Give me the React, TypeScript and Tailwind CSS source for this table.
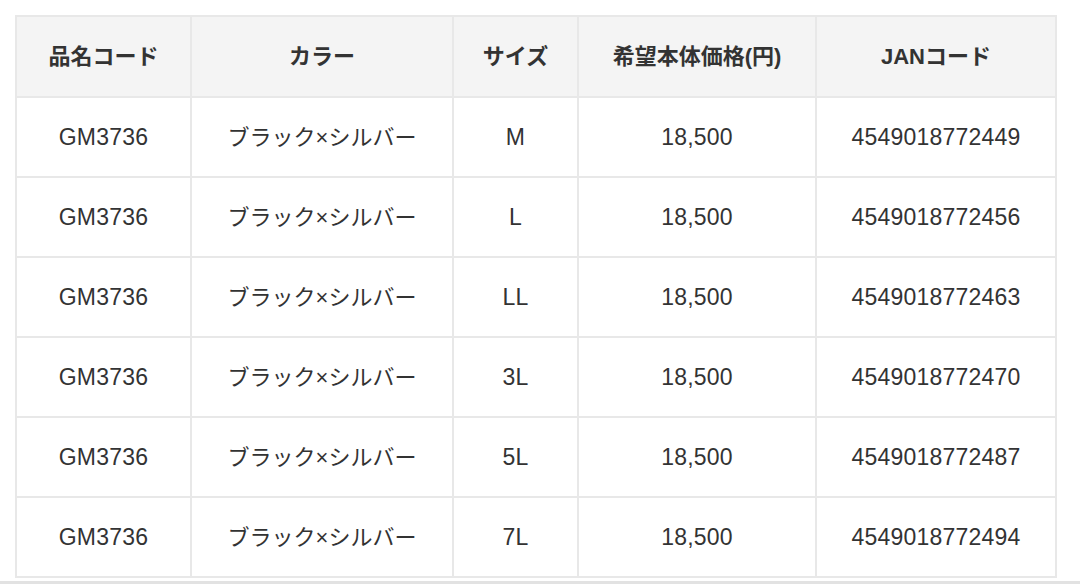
const HEADERS = ['品名コード', 'カラー', 'サイズ', '希望本体価格(円)', 'JANコード']
const WIDTHS = ['w-[175px]', 'w-[262px]', 'w-[125px]', 'w-[238px]', 'w-[240px]']

const ROWS = [
  { size: 'M', jan: '4549018772449' },
  { size: 'L', jan: '4549018772456' },
  { size: 'LL', jan: '4549018772463' },
  { size: '3L', jan: '4549018772470' },
  { size: '5L', jan: '4549018772487' },
  { size: '7L', jan: '4549018772494' },
]

const cell = 'border-2 border-[#e8e8e8] text-center'
const latin = `${cell} text-[23px] tracking-[0.2px]`

export default function App() {
  return (
    <main
      className="w-[1080px] h-[584px] bg-white text-[#333] overflow-hidden flex flex-col"
      style={{ fontFamily: "'Liberation Sans', 'Noto Sans CJK JP', sans-serif" }}
    >
      <div className="pt-[15px] pl-[15px] flex-1">
        <table className="border-collapse table-fixed w-[1040px] text-[22px]">
          <thead>
            <tr className="h-[81px] bg-[#f4f4f4]">
              {HEADERS.map((h, i) => (
                <th key={h} className={`${WIDTHS[i]} ${cell} font-bold`}>
                  {h}
                </th>
              ))}
            </tr>
          </thead>
          <tbody>
            {ROWS.map((r) => (
              <tr key={r.jan} className="h-[80px]">
                <td className={latin}>GM3736</td>
                <td className={cell}>ブラック×シルバー</td>
                <td className={latin}>{r.size}</td>
                <td className={latin}>18,500</td>
                <td className={latin}>{r.jan}</td>
              </tr>
            ))}
          </tbody>
        </table>
      </div>
      <div className="h-[3px] bg-[#e2e2e2]" />
    </main>
  )
}
